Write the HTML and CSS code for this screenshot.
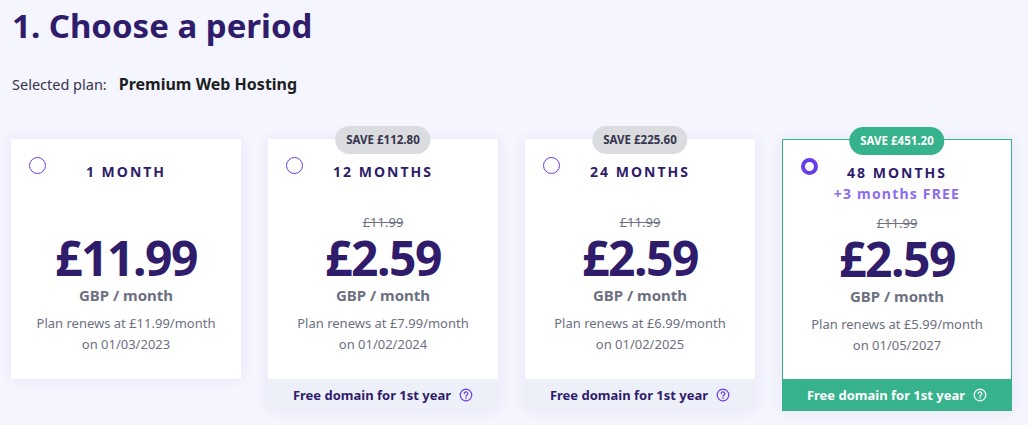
FILE: index.html
```html
<!DOCTYPE html>
<html>
<head>
<meta charset="utf-8">
<link rel="stylesheet" href="styles.css">
</head>
<body>
<div class="page">
  <h1 class="title">1. Choose a period</h1>
  <div class="selected"><span class="sel-label">Selected plan:</span><span class="sel-plan">Premium Web Hosting</span></div>

  <div class="cards">
    <div class="card">
      <div class="card-body">
        <span class="radio"></span>
        <div class="period">1 MONTH</div>
        <div class="bonus"></div>
        <div class="old-price hidden">£11.99</div>
        <div class="price">£11.99</div>
        <div class="unit">GBP / month</div>
        <div class="renew">Plan renews at £11.99/month<br>on 01/03/2023</div>
      </div>
    </div>

    <div class="card">
      <div class="badge">SAVE £112.80</div>
      <div class="card-body">
        <span class="radio"></span>
        <div class="period">12 MONTHS</div>
        <div class="bonus"></div>
        <div class="old-price">£11.99</div>
        <div class="price">£2.59</div>
        <div class="unit">GBP / month</div>
        <div class="renew">Plan renews at £7.99/month<br>on 01/02/2024</div>
      </div>
      <div class="footer">Free domain for 1st year
        <svg class="help" viewBox="0 0 16 16" width="14" height="14"><circle cx="8" cy="8" r="6.6" fill="none" stroke="currentColor" stroke-width="1.4"/><path d="M6 6.4a2 2 0 1 1 2.9 1.8c-.6.3-.9.7-.9 1.3v.3" fill="none" stroke="currentColor" stroke-width="1.4" stroke-linecap="round"/><circle cx="8" cy="11.7" r=".9" fill="currentColor"/></svg>
      </div>
    </div>

    <div class="card">
      <div class="badge">SAVE £225.60</div>
      <div class="card-body">
        <span class="radio"></span>
        <div class="period">24 MONTHS</div>
        <div class="bonus"></div>
        <div class="old-price">£11.99</div>
        <div class="price">£2.59</div>
        <div class="unit">GBP / month</div>
        <div class="renew">Plan renews at £6.99/month<br>on 01/02/2025</div>
      </div>
      <div class="footer">Free domain for 1st year
        <svg class="help" viewBox="0 0 16 16" width="14" height="14"><circle cx="8" cy="8" r="6.6" fill="none" stroke="currentColor" stroke-width="1.4"/><path d="M6 6.4a2 2 0 1 1 2.9 1.8c-.6.3-.9.7-.9 1.3v.3" fill="none" stroke="currentColor" stroke-width="1.4" stroke-linecap="round"/><circle cx="8" cy="11.7" r=".9" fill="currentColor"/></svg>
      </div>
    </div>

    <div class="card selected-card">
      <div class="badge badge-green">SAVE £451.20</div>
      <div class="card-body">
        <span class="radio radio-on"></span>
        <div class="period">48 MONTHS</div>
        <div class="bonus">+3 months FREE</div>
        <div class="old-price">£11.99</div>
        <div class="price">£2.59</div>
        <div class="unit">GBP / month</div>
        <div class="renew">Plan renews at £5.99/month<br>on 01/05/2027</div>
      </div>
      <div class="footer footer-green">Free domain for 1st year
        <svg class="help" viewBox="0 0 16 16" width="14" height="14"><circle cx="8" cy="8" r="6.6" fill="none" stroke="currentColor" stroke-width="1.4"/><path d="M6 6.4a2 2 0 1 1 2.9 1.8c-.6.3-.9.7-.9 1.3v.3" fill="none" stroke="currentColor" stroke-width="1.4" stroke-linecap="round"/><circle cx="8" cy="11.7" r=".9" fill="currentColor"/></svg>
      </div>
    </div>
  </div>
</div>
</body>
</html>
```

FILE: styles.css
```css
* { box-sizing: border-box; }
html, body { margin: 0; padding: 0; }
body {
  background: #f4f5ff;
  font-family: "Noto Sans", "Open Sans", sans-serif;
  color: #2f1c6a;
  width: 1028px;
  height: 425px;
  overflow: hidden;
}
.page { padding: 4px 0 0 12px; }
.title {
  margin: 0;
  font-size: 33px;
  line-height: 44px;
  font-weight: 700;
  color: #2f1c6a;
}
.selected {
  margin-top: 25px;
  display: flex;
  align-items: baseline;
  gap: 12px;
  line-height: 22px;
}
.sel-label { font-size: 14.5px; color: #36344d; }
.sel-plan { font-size: 16px; font-weight: 700; color: #1d1e20; }

.cards {
  display: flex;
  gap: 27px;
  margin-top: 44px;
  margin-left: -1px;
  align-items: flex-start;
}
.card {
  position: relative;
  width: 230px;
  display: flex;
  flex-direction: column;
  box-shadow: 0 0 14px rgba(40, 40, 100, 0.07);
}
.card-body {
  position: relative;
  background: #fff;
  height: 240px;
  padding-top: 23px;
  text-align: center;
}
.radio {
  position: absolute;
  top: 18px;
  left: 18px;
  width: 17px;
  height: 17px;
  border: 1.5px solid #673de6;
  border-radius: 50%;
}
.radio-on { border-width: 4.5px; }
.period {
  font-size: 14px;
  line-height: 20px;
  font-weight: 700;
  letter-spacing: 2px;
  color: #2f1c6a;
}
.bonus {
  height: 22px;
  font-size: 14px;
  line-height: 22px;
  font-weight: 700;
  letter-spacing: 1.2px;
  color: #8c6cf0;
}
.old-price {
  margin-top: 8px;
  font-size: 13px;
  line-height: 20px;
  color: #6d7081;
  text-decoration: line-through;
}
.hidden { visibility: hidden; }
.price {
  margin-top: 4px;
  font-size: 48px;
  line-height: 44px;
  font-weight: 700;
  letter-spacing: -1.5px;
  color: #2f1c6a;
}
.unit {
  margin-top: 4px;
  font-size: 15px;
  line-height: 22px;
  font-weight: 700;
  color: #6d7081;
}
.renew {
  margin-top: 7px;
  font-size: 13px;
  line-height: 21px;
  color: #6d7081;
}
.footer {
  height: 31px;
  background: #eef0f9;
  display: flex;
  align-items: center;
  justify-content: center;
  gap: 8px;
  font-size: 13px;
  font-weight: 700;
  color: #2f1c6a;
}
.footer .help { color: #673de6; }
.badge {
  position: absolute;
  top: -13px;
  left: 50%;
  transform: translateX(-50%);
  z-index: 2;
  height: 28px;
  padding: 0 11px;
  border-radius: 14px;
  background: #dadce0;
  color: #36344d;
  font-size: 11.5px;
  font-weight: 700;
  line-height: 28px;
  white-space: nowrap;
}
.badge-green { background: #36b28c; color: #fff; }
.selected-card { border: 1px solid #36b28c; }
.selected-card .card-body { height: 239px; }
.footer-green { background: #36b28c; color: #fff; }
.footer-green .help { color: #fff; }
```
